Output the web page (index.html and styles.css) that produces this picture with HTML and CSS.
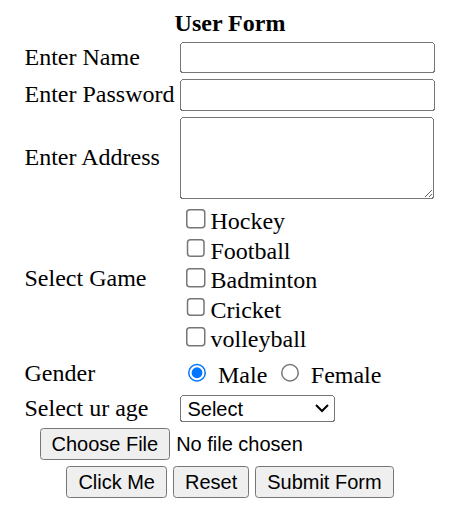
FILE: index.html
```html
<!DOCTYPE html>
<html>
<head>
<meta charset="utf-8">
<title>User Form</title>
<link rel="stylesheet" href="styles.css">
</head>
<body>
<form class="user-form">
<table class="form-table">
<caption class="form-title">User Form</caption>
<tr>
<td class="label">Enter Name</td>
<td><input type="text" class="field"></td>
</tr>
<tr>
<td class="label">Enter Password</td>
<td><input type="password" class="field"></td>
</tr>
<tr>
<td class="label">Enter Address</td>
<td><textarea class="area" rows="3"></textarea></td>
</tr>
<tr>
<td class="label">Select Game</td>
<td>
<input type="checkbox" class="check">Hockey<br>
<input type="checkbox" class="check">Football<br>
<input type="checkbox" class="check">Badminton<br>
<input type="checkbox" class="check">Cricket<br>
<input type="checkbox" class="check">volleyball
</td>
</tr>
<tr>
<td class="label">Gender</td>
<td class="gender"><input type="radio" name="g" class="radio" checked> Male <input type="radio" name="g" class="radio"> Female</td>
</tr>
<tr>
<td class="label">Select ur age</td>
<td><select class="age"><option>Select</option><option>18-25</option><option>26-40</option></select></td>
</tr>
<tr>
<td colspan="2" class="file-cell"><input type="file" class="file"></td>
</tr>
<tr>
<td colspan="2" class="actions"><button type="button" class="btn">Click Me</button> <input type="reset" class="btn" value="Reset"> <input type="submit" class="btn" value="Submit Form"></td>
</tr>
</table>
</form>
</body>
</html>
```
FILE: styles.css
```css
html {
  zoom: 1.5;
}
body {
  margin: 6.667px 8px 8px 10.667px;
  font-family: "Liberation Serif", "Times New Roman", serif;
  font-size: 16px;
  color: #000;
  background: #fff;
}
.user-form {
  margin: 0;
}
.form-table {
  margin: 0 auto;
  border-spacing: 2px;
}
.form-title {
  font-weight: bold;
}
.form-table td {
  padding: 1px;
}
.field {
  font-family: "Liberation Sans", Arial, sans-serif;
  font-size: 13.333px;
  width: 170px;
  box-sizing: border-box;
  height: 21px;
}
.area {
  font-family: "Liberation Mono", "Courier New", monospace;
  font-size: 13.333px;
  width: 169px;
  height: 55px;
  box-sizing: border-box;
  vertical-align: bottom;
}
.check {
  margin-top: 2.667px;
}
.age {
  font-family: "Liberation Sans", Arial, sans-serif;
  font-size: 13.333px;
  width: 103px;
  height: 18px;
}
.file,
.btn {
  font-family: "Liberation Sans", Arial, sans-serif;
  font-size: 13.333px;
}
.file-cell {
  padding-left: 11px !important;
}
.actions {
  text-align: center;
}
```
